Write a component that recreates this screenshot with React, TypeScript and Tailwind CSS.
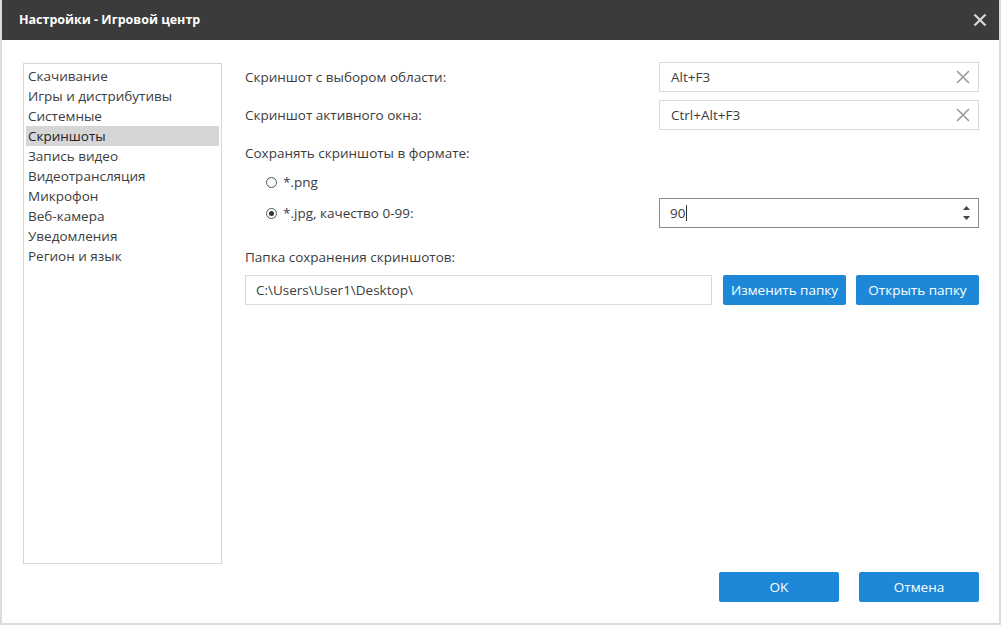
import React from "react";

const font = { fontFamily: '"Open Sans", "Noto Sans", sans-serif' };

function ClearX() {
  return (
    <svg width="14" height="14" viewBox="0 0 14 14" className="shrink-0">
      <path d="M1 1L13 13M13 1L1 13" stroke="#9a9a9a" strokeWidth="1.6" />
    </svg>
  );
}

export default function App() {
  const items = [
    "Скачивание",
    "Игры и дистрибутивы",
    "Системные",
    "Скриншоты",
    "Запись видео",
    "Видеотрансляция",
    "Микрофон",
    "Веб-камера",
    "Уведомления",
    "Регион и язык",
  ];
  return (
    <div
      className="w-[1001px] h-[625px] flex flex-col bg-white border-l-2 border-r-2 border-b-2 border-[#dcdcdc] overflow-hidden text-[13.5px] text-[#3c3c3c]"
      style={font}
    >
      <div className="h-[40px] shrink-0 bg-[#3b3b3b] flex items-center justify-between pl-[19px] pr-[14px] -mx-[2px]">
        <span className="text-white font-bold text-[12.5px]">Настройки - Игровой центр</span>
        <svg width="14" height="14" viewBox="0 0 14 14">
          <path d="M1.5 1.5L12.5 12.5M12.5 1.5L1.5 12.5" stroke="#d8d8d8" strokeWidth="2.2" />
        </svg>
      </div>
      <div className="flex-1 flex pt-[23px] pl-[21px] pr-[20px] pb-[59px]">
        <div className="w-[200px] h-[501px] border border-[#d6d6d6] pt-[2px] px-[2px] flex flex-col">
          {items.map((it) => (
            <div
              key={it}
              className={`h-[20px] leading-[20px] pl-[2px] ${it === "Скриншоты" ? "bg-[#d6d6d6] text-[#222]" : ""}`}
            >
              {it}
            </div>
          ))}
        </div>
        <div className="flex-1 pl-[23px] flex flex-col">
          <div className="flex items-center justify-between h-[30px] -mt-[1px]">
            <span>Скриншот с выбором области:</span>
            <div className="w-[320px] h-[30px] border border-[#dadada] flex items-center justify-between pl-[11px] pr-[8px]">
              <span>Alt+F3</span>
              <ClearX />
            </div>
          </div>
          <div className="flex items-center justify-between h-[30px] mt-[8px]">
            <span>Скриншот активного окна:</span>
            <div className="w-[320px] h-[30px] border border-[#dadada] flex items-center justify-between pl-[11px] pr-[8px]">
              <span>Ctrl+Alt+F3</span>
              <ClearX />
            </div>
          </div>
          <div className="mt-[13px] h-[20px] leading-[20px]">Сохранять скриншоты в формате:</div>
          <div className="mt-[9px] h-[20px] pl-[21px] flex items-center gap-[6px]">
            <span className="w-[11px] h-[11px] rounded-full border border-[#555] bg-white" />
            <span>*.png</span>
          </div>
          <div className="mt-[6px] flex items-center justify-between h-[30px]">
            <div className="pl-[21px] flex items-center gap-[6px]">
              <span className="w-[11px] h-[11px] rounded-full border border-[#555] bg-white flex items-center justify-center">
                <span className="w-[5px] h-[5px] rounded-full bg-[#333]" />
              </span>
              <span>*.jpg, качество 0-99:</span>
            </div>
            <div className="w-[320px] h-[30px] border border-[#8a8a8a] flex items-center justify-between pl-[10px] pr-[8px]">
              <span className="flex items-center">
                90<span className="w-[1px] h-[16px] bg-[#333] ml-[1px]" />
              </span>
              <div className="flex flex-col gap-[6px]">
                <svg width="7" height="4" viewBox="0 0 7 4"><path d="M0 4L3.5 0L7 4Z" fill="#444" /></svg>
                <svg width="7" height="4" viewBox="0 0 7 4"><path d="M0 0L3.5 4L7 0Z" fill="#444" /></svg>
              </div>
            </div>
          </div>
          <div className="mt-[19px] h-[20px] leading-[20px]">Папка сохранения скриншотов:</div>
          <div className="mt-[8px] flex items-center h-[30px]">
            <div className="w-[467px] h-[30px] border border-[#dadada] flex items-center pl-[10px]">
              C:\Users\User1\Desktop\
            </div>
            <button className="ml-[11px] w-[123px] h-[30px] bg-[#1d88d8] text-white rounded-[2px]">
              Изменить папку
            </button>
            <button className="ml-[10px] w-[123px] h-[30px] bg-[#1d88d8] text-white rounded-[2px]">
              Открыть папку
            </button>
          </div>
        </div>
      </div>
      <div className="-mt-[51px] h-[51px] flex items-start justify-end pr-[20px] gap-[20px]">
        <button className="w-[120px] h-[30px] bg-[#1d88d8] text-white rounded-[2px]">OK</button>
        <button className="w-[120px] h-[30px] bg-[#1d88d8] text-white rounded-[2px]">Отмена</button>
      </div>
    </div>
  );
}
